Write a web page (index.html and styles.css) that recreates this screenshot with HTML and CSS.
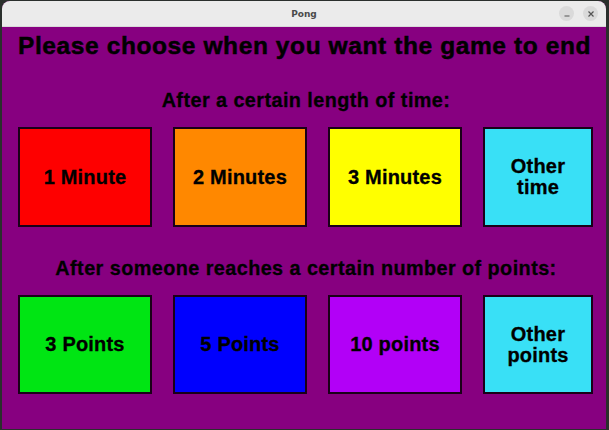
FILE: index.html
```html
<!DOCTYPE html>
<html>
<head>
<meta charset="utf-8">
<link rel="stylesheet" href="styles.css">
</head>
<body>
<div class="window">
  <div class="titlebar">
    <span class="title">Pong</span>
    <div class="controls">
      <span class="ctl"><svg width="14" height="14" viewBox="0 0 14 14"><line x1="4.5" y1="9" x2="9.5" y2="9" stroke="#555" stroke-width="1.2"/></svg></span>
      <span class="ctl"><svg width="14" height="14" viewBox="0 0 14 14"><path d="M4.5 4.5 L9.5 9.5 M9.5 4.5 L4.5 9.5" stroke="#555" stroke-width="1.2"/></svg></span>
    </div>
  </div>
  <div class="content">
    <h1 class="heading">Please choose when you want the game to end</h1>
    <h2 class="sub sub-time">After a certain length of time:</h2>
    <div class="row">
      <div class="btn red">1 Minute</div>
      <div class="btn orange">2 Minutes</div>
      <div class="btn yellow">3 Minutes</div>
      <div class="btn cyan narrow">Other<br>time</div>
    </div>
    <h2 class="sub sub-points">After someone reaches a certain number of points:</h2>
    <div class="row">
      <div class="btn green">3 Points</div>
      <div class="btn blue">5 Points</div>
      <div class="btn violet">10 points</div>
      <div class="btn cyan narrow">Other<br>points</div>
    </div>
  </div>
</div>
</body>
</html>
```

FILE: styles.css
```css
html, body {
  margin: 0;
  padding: 0;
  background: #2a2f2c;
  width: 609px;
  height: 430px;
  overflow: hidden;
}
body {
  font-family: "Liberation Sans", Arial, sans-serif;
}
.window {
  margin: 1px 3px 0 2px;
  width: 604px;
  height: 428px;
  display: flex;
  flex-direction: column;
  border-radius: 8px 8px 0 0;
  overflow: hidden;
  background: #870080;
}
.titlebar {
  height: 25px;
  flex: none;
  background: #ebebeb;
  border-bottom: 1px solid #d8d8d8;
  position: relative;
  display: flex;
  align-items: center;
  justify-content: center;
}
.title {
  font-family: "DejaVu Sans", sans-serif;
  font-size: 9px;
  font-weight: bold;
  color: #4a4a4a;
}
.controls {
  position: absolute;
  right: 8px;
  top: 5px;
  display: flex;
  gap: 9px;
}
.ctl {
  width: 15px;
  height: 15px;
  border-radius: 50%;
  background: #dadada;
  display: flex;
  align-items: center;
  justify-content: center;
}
.content {
  flex: 1;
  background: #870080;
  padding: 5px 0 0 16px;
  color: #000;
}
.heading {
  margin: 0;
  font-size: 24.5px;
  font-weight: bold;
  letter-spacing: 0.6px;
  line-height: 28px;
  width: 580px;
  text-align: left;
  -webkit-text-stroke: 0.5px #000;
}
.sub {
  margin: 0;
  font-size: 19.8px;
  font-weight: bold;
  letter-spacing: 0.45px;
  text-align: center;
  width: 576px;
  line-height: 24px;
  -webkit-text-stroke: 0.3px #000;
}
.sub-time {
  margin-top: 28px;
}
.sub-points {
  margin-top: 29px;
}
.row {
  display: flex;
  gap: 21px;
  margin-top: 15px;
}
.row + .sub + .row .btn {
  height: 95px;
}
.btn {
  width: 130px;
  height: 96px;
  border: 2px solid #1a0018;
  display: flex;
  align-items: center;
  justify-content: center;
  text-align: center;
  font-size: 20px;
  font-weight: bold;
  line-height: 21px;
  letter-spacing: 0.2px;
  -webkit-text-stroke: 0.3px #000;
}
.btn.narrow {
  width: 106px;
}
.red { background: #fe0000; }
.orange { background: #ff8800; }
.yellow { background: #ffff00; }
.cyan { background: #39e0f6; }
.green { background: #00e513; }
.blue { background: #0000fe; }
.violet { background: #b200f7; }
```
